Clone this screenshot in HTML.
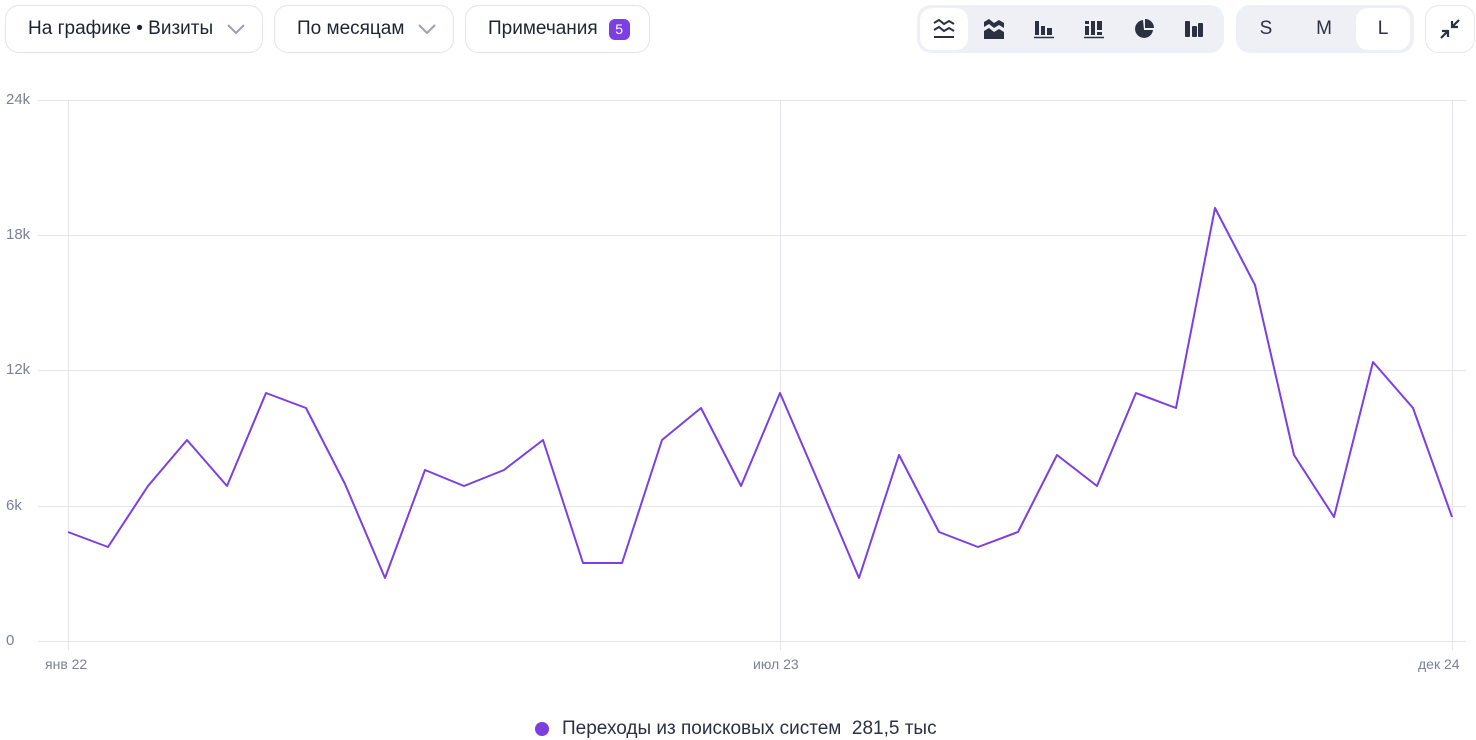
<!DOCTYPE html>
<html><head><meta charset="utf-8"><style>
body{margin:0;width:1476px;height:740px;background:#fff;font-family:"Liberation Sans",sans-serif;overflow:hidden;position:relative;color:#1f2430}
.btn{position:absolute;top:5px;height:48px;border:1px solid #e3e4ec;border-radius:14px;box-sizing:border-box;display:flex;align-items:center;font-size:19px;padding-left:22px}
.grp{position:absolute;top:5px;height:48px;background:#eef0f5;border-radius:14px}
.ic{position:absolute;top:3px;width:48px;height:42px;display:flex;align-items:center;justify-content:center;border-radius:12px}
.sel{background:#fff}
.sz{position:absolute;top:3px;width:54px;height:42px;display:flex;align-items:center;justify-content:center;border-radius:12px;font-size:19px;color:#2b3140}
.lab{position:absolute;font-size:14px;color:#7d8194}
</style></head><body>
<div class="btn" style="left:5px;width:258px">На графике • Визиты<svg style="margin-left:14px" width="18" height="10" viewBox="0 0 18 10"><path d="M1 1l8 8 8-8" stroke="#9ba0b3" stroke-width="2" fill="none"/></svg></div>
<div class="btn" style="left:274px;width:180px">По месяцам<svg style="margin-left:14px" width="18" height="10" viewBox="0 0 18 10"><path d="M1 1l8 8 8-8" stroke="#9ba0b3" stroke-width="2" fill="none"/></svg></div>
<div class="btn" style="left:465px;width:185px">Примечания<span style="margin-left:11px;background:#7b3fe4;color:#fff;font-size:14px;border-radius:6px;width:21px;height:21px;display:inline-flex;align-items:center;justify-content:center">5</span></div>

<div class="grp" style="left:917px;width:307px">
<div class="ic sel" style="left:3px"><svg width="22" height="20" viewBox="0 0 22 20"><path d="M1 4l5-3 5 4 5-3 5 3M1 11l5-3 5 4 5-3 5 3" stroke="#2b3140" stroke-width="2" fill="none"/><path d="M1 18h20" stroke="#2b3140" stroke-width="2"/></svg></div>
<div class="ic" style="left:53px"><svg width="22" height="20" viewBox="0 0 22 20"><path d="M1 3l5-3 5 4 5-3 5 3v5l-5-3-5 3-5-4-5 3zM1 12l5-3 5 4 5-3 5 3v7H1z" fill="#2b3140"/></svg></div>
<div class="ic" style="left:103px"><svg width="22" height="20" viewBox="0 0 22 20"><rect x="2" y="2" width="4" height="14" fill="#2b3140"/><rect x="8" y="7" width="4" height="9" fill="#2b3140"/><rect x="14" y="9" width="5" height="7" fill="#2b3140"/><path d="M1 18.5h20" stroke="#2b3140" stroke-width="1.5"/></svg></div>
<div class="ic" style="left:153px"><svg width="22" height="20" viewBox="0 0 22 20"><rect x="2" y="7" width="4" height="9" fill="#2b3140"/><rect x="2" y="2" width="4" height="3" fill="#2b3140"/><rect x="8" y="2" width="4" height="14" fill="#2b3140"/><rect x="14" y="2" width="5" height="9" fill="#2b3140"/><rect x="14" y="13" width="5" height="3" fill="#2b3140"/><path d="M1 18.5h20" stroke="#2b3140" stroke-width="1.5"/></svg></div>
<div class="ic" style="left:203px"><svg width="22" height="22" viewBox="0 0 22 22"><path d="M10 2A9 9 0 1 0 20 12H11z M12 1v9h9A9 9 0 0 0 12 1z" fill="#2b3140"/></svg></div>
<div class="ic" style="left:253px"><svg width="22" height="20" viewBox="0 0 22 20"><rect x="2" y="2" width="5" height="16" rx="1" fill="#2b3140"/><rect x="9" y="7" width="5" height="11" rx="1" fill="#2b3140"/><rect x="15" y="4" width="5" height="14" rx="1" fill="#2b3140"/></svg></div>
</div>
<div class="grp" style="left:1236px;width:178px">
<div class="sz" style="left:3px">S</div><div class="sz" style="left:61px">M</div><div class="sz sel" style="left:120px">L</div>
</div>
<div class="btn" style="left:1425px;width:50px;padding:0;justify-content:center;border-color:#e6e7ef"><svg width="22" height="22" viewBox="0 0 22 22"><path d="M13 9l7-7M13 3v6h6M9 13l-7 7M3 13h6v6" stroke="#2b3140" stroke-width="2.2" fill="none"/></svg></div>

<svg style="position:absolute;left:0;top:0" width="1476" height="740">
<g stroke="#e6e5ee" stroke-width="1">
<path d="M38 100.5H1466M38 235.5H1466M38 370.5H1466M38 506.5H1466M38 641.5H1466M68.5 100V650M780.5 100V650M1452.5 100V650"/>
</g>
<polyline fill="none" stroke="#7b3fe4" stroke-width="2" stroke-linejoin="round" points="68,532 108,547 148,486 187,440 227,486 266,393 306,408 345,484 385,578 425,470 464,486 504,470 543,440 583,563 622,563 662,440 701,408 741,486 780,393 820,486 859,578 899,455 939,532 978,547 1018,532 1057,455 1097,486 1136,393 1176,408 1215,208 1255,285 1294,455 1334,517 1373,362 1413,408 1452,517"/>
<circle cx="542" cy="729" r="7" fill="#7b3fe4"/>
</svg>
<div class="lab" style="left:6px;top:91px;font-size:15px">24k</div>
<div class="lab" style="left:6px;top:226px;font-size:15px">18k</div>
<div class="lab" style="left:6px;top:361px;font-size:15px">12k</div>
<div class="lab" style="left:6px;top:497px;font-size:15px">6k</div>
<div class="lab" style="left:6px;top:632px;font-size:15px">0</div>
<div class="lab" style="left:45px;top:656px">янв 22</div>
<div class="lab" style="left:753px;top:656px">июл 23</div>
<div class="lab" style="left:1418px;top:656px">дек 24</div>
<div style="position:absolute;left:562px;top:718px;font-size:19px;color:#2b3140">Переходы из поисковых систем&nbsp;&nbsp;281,5 тыс</div>
</body></html>
